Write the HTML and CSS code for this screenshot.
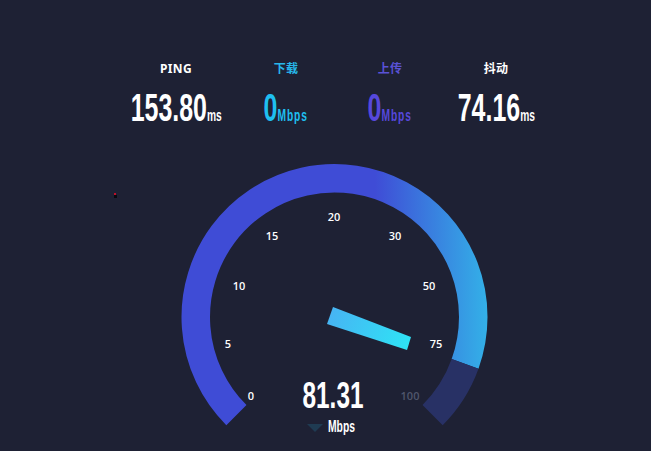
FILE: index.html
```html
<!DOCTYPE html>
<html lang="zh">
<head>
<meta charset="utf-8">
<title>Speed Test</title>
<link rel="stylesheet" href="styles.css">
</head>
<body>
<div class="page">
  <section class="stats">
    <div class="stat stat-ping">
      <div class="label label-white">PING</div>
      <div class="value value-white"><span class="num">153.80</span><span class="unit">ms</span></div>
    </div>
    <div class="stat stat-down">
      <div class="label label-cyan">下载</div>
      <div class="value value-cyan"><span class="num">0</span><span class="unit unit-mbps">Mbps</span></div>
    </div>
    <div class="stat stat-up">
      <div class="label label-violet">上传</div>
      <div class="value value-violet"><span class="num">0</span><span class="unit unit-mbps">Mbps</span></div>
    </div>
    <div class="stat stat-jitter">
      <div class="label label-white">抖动</div>
      <div class="value value-white"><span class="num">74.16</span><span class="unit">ms</span></div>
    </div>
  </section>
  <svg class="gauge" width="651" height="324" viewBox="0 127 651 324" xmlns="http://www.w3.org/2000/svg">
    <defs>
      <linearGradient id="arcGrad" gradientUnits="userSpaceOnUse" x1="375" y1="0" x2="490" y2="0">
        <stop offset="0" stop-color="#3f4cd6"/>
        <stop offset="1" stop-color="#33b3e8"/>
      </linearGradient>
      <linearGradient id="needleGrad" gradientUnits="userSpaceOnUse" x1="330" y1="312" x2="410" y2="344">
        <stop offset="0" stop-color="#47b4f3"/>
        <stop offset="1" stop-color="#2ee4f5"/>
      </linearGradient>
    </defs>
    <rect x="114" y="193" width="2" height="2" fill="#c0102a"/>
    <rect x="114" y="195" width="3" height="3" fill="#0a0a12"/>
    <path d="M 236.39 415.11 A 138.75 138.75 0 1 1 465.08 363.93" fill="none" stroke="url(#arcGrad)" stroke-width="28.5"/>
    <path d="M 465.08 363.93 A 138.75 138.75 0 0 1 432.61 415.11" fill="none" stroke="#283165" stroke-width="28.5"/>
    <polygon points="333,307 327,324 407,350 411,337" fill="url(#needleGrad)"/>
    <g class="ticks">
      <text x="251" y="400">0</text>
      <text x="228" y="348">5</text>
      <text x="239" y="290">10</text>
      <text x="272" y="240">15</text>
      <text x="334" y="221">20</text>
      <text x="395" y="240">30</text>
      <text x="429" y="290">50</text>
      <text x="436" y="348">75</text>
      <text x="410" y="400" class="tick-max">100</text>
    </g>
    <text class="speed" x="333" y="408" textLength="61" lengthAdjust="spacingAndGlyphs">81.31</text>
    <polygon points="307,424 323,424 315,432" fill="#1f3b52"/>
    <text class="speed-unit" x="328" y="432" textLength="27" lengthAdjust="spacingAndGlyphs">Mbps</text>
  </svg>
</div>
</body>
</html>
```
FILE: styles.css
```css
html, body {
  margin: 0;
  padding: 0;
  background: #1e2134;
}
.page {
  width: 651px;
  height: 451px;
  overflow: hidden;
  background: #1e2134;
  font-family: "Liberation Sans", "Noto Sans CJK SC", sans-serif;
}
.stats {
  box-sizing: border-box;
  height: 127px;
  padding-top: 62px;
  padding-left: 119px;
  display: flex;
}
.stat {
  display: flex;
  flex-direction: column;
  align-items: center;
}
.stat-ping { width: 114px; }
.stat-down { width: 106px; }
.stat-up { width: 102px; }
.stat-jitter { width: 110px; }
.label {
  font-family: "Noto Sans", "Noto Sans CJK SC", sans-serif;
  font-size: 12px;
  font-weight: 700;
  line-height: 14px;
  height: 14px;
  letter-spacing: 0.3px;
}
.label-white { color: #ffffff; }
.label-cyan { color: #27b6ea; }
.label-violet { color: #5a52d6; }
.value {
  margin-top: 12px;
  display: flex;
  align-items: baseline;
  white-space: nowrap;
  font-family: "Liberation Sans", sans-serif;
  font-weight: 700;
  line-height: 39px;
  height: 39px;
  transform: scaleX(0.64);
  transform-origin: center;
}
.num {
  font-size: 39px;
}
.unit {
  font-size: 16px;
}
.unit-mbps {
  font-size: 16px;
  letter-spacing: 1.5px;
}
.value-white { color: #ffffff; }
.value-cyan { color: #1fbff0; }
.value-violet { color: #5648dc; }
.gauge {
  display: block;
}
.ticks text {
  font-family: "Open Sans", "Noto Sans", sans-serif;
  font-size: 11px;
  font-weight: 600;
  fill: #ffffff;
  text-anchor: middle;
}
.ticks .tick-max {
  fill: #50566c;
}
.speed {
  font-family: "Liberation Sans", sans-serif;
  font-size: 36px;
  font-weight: 700;
  fill: #ffffff;
  text-anchor: middle;
}
.speed-unit {
  font-family: "Liberation Sans", sans-serif;
  font-size: 16px;
  font-weight: 700;
  fill: #ffffff;
}
```
